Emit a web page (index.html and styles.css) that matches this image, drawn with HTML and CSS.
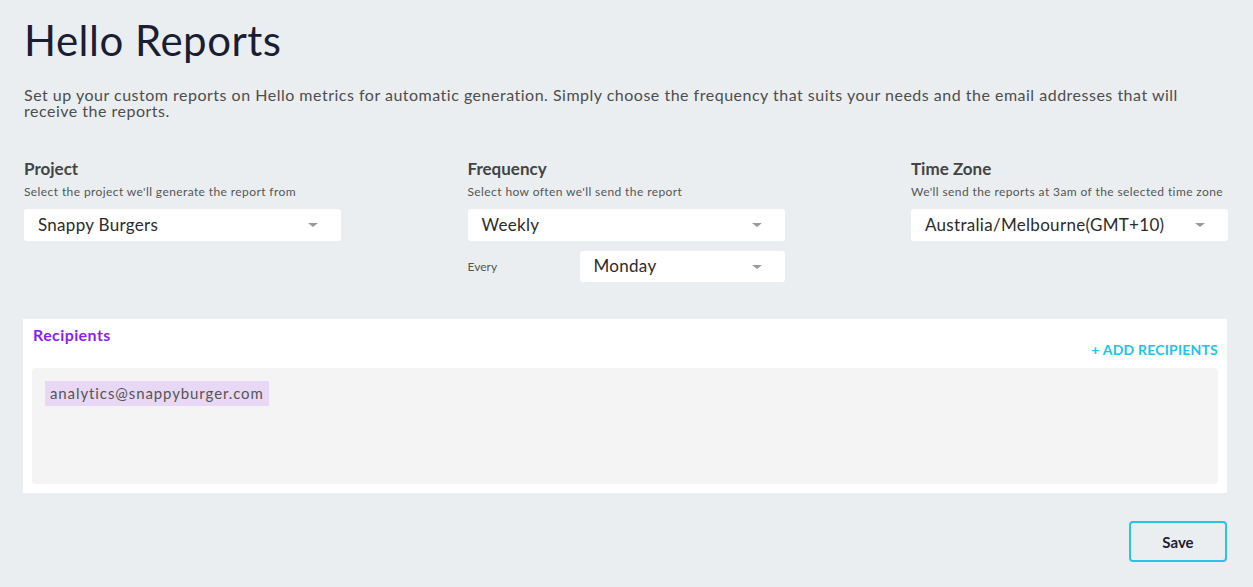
FILE: index.html
```html
<!DOCTYPE html>
<html>
<head>
<meta charset="utf-8">
<link rel="stylesheet" href="styles.css">
</head>
<body>
<main class="page">
  <h1 class="title">Hello Reports</h1>
  <p class="intro">Set up your custom reports on Hello metrics for automatic generation. Simply choose the frequency that suits your needs and the email addresses that will receive the reports.</p>

  <section class="fields">
    <div class="field">
      <h2 class="field-label">Project</h2>
      <p class="field-help">Select the project we'll generate the report from</p>
      <div class="select"><span>Snappy Burgers</span><i class="caret"></i></div>
    </div>
    <div class="field">
      <h2 class="field-label">Frequency</h2>
      <p class="field-help">Select how often we'll send the report</p>
      <div class="select"><span>Weekly</span><i class="caret"></i></div>
      <div class="every-row">
        <span class="every-label">Every</span>
        <div class="select select-small"><span>Monday</span><i class="caret"></i></div>
      </div>
    </div>
    <div class="field">
      <h2 class="field-label">Time Zone</h2>
      <p class="field-help">We'll send the reports at 3am of the selected time zone</p>
      <div class="select"><span>Australia/Melbourne(GMT+10)</span><i class="caret"></i></div>
    </div>
  </section>

  <section class="recipients">
    <div class="recipients-head">
      <h2 class="recipients-title">Recipients</h2>
      <a class="add-link">+ ADD RECIPIENTS</a>
    </div>
    <div class="recipients-box">
      <span class="chip">analytics@snappyburger.com</span>
    </div>
  </section>

  <div class="actions">
    <button class="save-btn">Save</button>
  </div>
</main>
</body>
</html>
```

FILE: styles.css
```css
* { box-sizing: border-box; }
html, body { margin: 0; padding: 0; }
body {
  background: #eaeef1;
  font-family: "Lato", "Noto Sans", sans-serif;
  color: #4a4a4a;
  width: 1253px;
  height: 587px;
  overflow: hidden;
}
.page {
  padding: 18px 25px 0 24px;
}
.title {
  margin: 0;
  font-size: 42px;
  font-weight: 400;
  color: #1b1d33;
  line-height: 44px;
  letter-spacing: 0.5px;
}
.intro {
  margin: 25px 0 0;
  font-size: 16px;
  line-height: 16px;
  color: #4d4d4d;
  letter-spacing: 0.5px;
  width: 1200px;
}
.fields {
  display: flex;
  justify-content: space-between;
  margin-top: 40px;
}
.field {
  width: 317px;
}
.field-label {
  margin: 0;
  font-size: 17px;
  font-weight: 700;
  color: #444;
  line-height: 20px;
}
.field-help {
  margin: 5px 0 0;
  font-size: 12px;
  line-height: 16px;
  color: #555;
  letter-spacing: 0.4px;
}
.select {
  margin-top: 9px;
  height: 32px;
  background: #fff;
  border-radius: 3px;
  display: flex;
  align-items: center;
  justify-content: space-between;
  padding: 0 23px 2px 14px;
  font-size: 17px;
  color: #2b2b2b;
  letter-spacing: 0.3px;
}
.caret {
  width: 0;
  height: 0;
  margin-top: 2px;
  border-left: 5px solid transparent;
  border-right: 5px solid transparent;
  border-top: 4px solid #9a9a9a;
}
.every-row {
  display: flex;
  align-items: center;
  justify-content: space-between;
  margin-top: 10px;
}
.every-label {
  font-size: 12px;
  color: #555;
}
.select-small {
  margin-top: 0;
  width: 205px;
  height: 31px;
}
.recipients {
  margin-top: 37px;
  margin-left: -1px;
  margin-right: 1px;
  background: #fff;
  padding: 7px 9px 9px 9px;
}
.recipients-head {
  display: flex;
  justify-content: space-between;
  align-items: flex-start;
}
.recipients-title {
  margin: 0 0 0 1px;
  font-size: 16px;
  font-weight: 700;
  color: #8a1ff2;
  line-height: 18px;
  letter-spacing: 0.4px;
}
.add-link {
  margin-top: 16px;
  font-size: 14px;
  font-weight: 700;
  color: #22c3ea;
  letter-spacing: 0.2px;
  line-height: 16px;
}
.recipients-box {
  margin-top: 10px;
  height: 116px;
  background: #f4f4f4;
  border-radius: 4px;
  padding: 13px 13px;
}
.chip {
  display: inline-block;
  background: #e8d8f6;
  color: #555;
  font-size: 15px;
  line-height: 25px;
  padding: 0 5px;
  letter-spacing: 0.9px;
}
.actions {
  display: flex;
  justify-content: flex-end;
  margin-top: 28px;
  margin-right: 1px;
}
.save-btn {
  width: 98px;
  height: 41px;
  border: 2px solid #29c3ea;
  border-radius: 4px;
  background: transparent;
  font-family: inherit;
  font-size: 15px;
  font-weight: 700;
  color: #1f2033;
}
```
